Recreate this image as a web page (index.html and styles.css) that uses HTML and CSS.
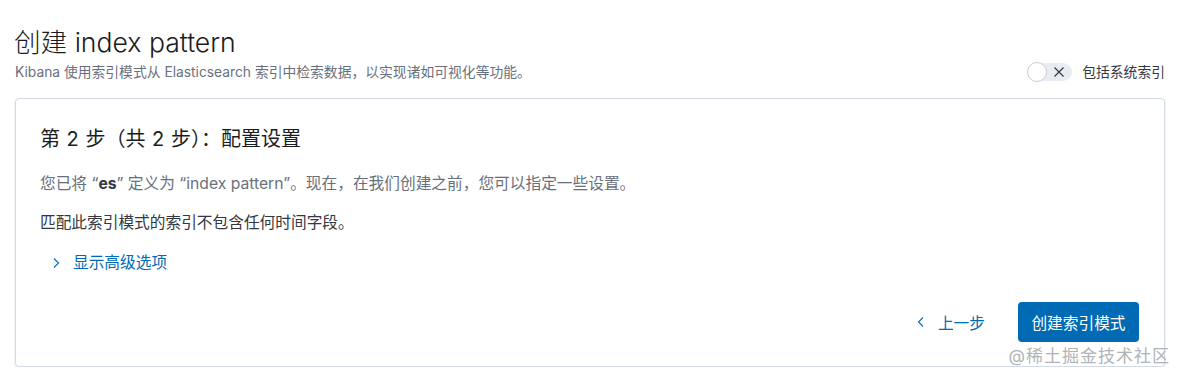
FILE: index.html
```html
<!DOCTYPE html>
<html>
<head>
    <link rel="stylesheet" href="styles.css">
</head>
<body>
    <div class="page-header">
        <div class="header-text">
            <h1 class="page-title">创建 index pattern</h1>
            <p class="page-subtitle">Kibana 使用索引模式从 Elasticsearch 索引中检索数据，以实现诸如可视化等功能。</p>
        </div>
        <label class="switch-group">
            <span class="switch">
                <span class="switch-thumb"></span>
                <svg class="switch-icon" width="12" height="12" viewBox="0 0 12 12">
                    <path d="M1.5 1.5 L10.5 10.5 M10.5 1.5 L1.5 10.5" stroke="#343741" stroke-width="1.2" fill="none"/>
                </svg>
            </span>
            <span class="switch-label">包括系统索引</span>
        </label>
    </div>

    <div class="panel">
        <h2 class="step-title">第 2 步（共 2 步）：配置设置</h2>
        <p class="step-desc">您已将 “<strong>es</strong>” 定义为 “index pattern”。现在，在我们创建之前，您可以指定一些设置。</p>
        <p class="step-note">匹配此索引模式的索引不包含任何时间字段。</p>
        <a class="link-toggle" href="#">
            <svg width="12" height="12" viewBox="0 0 12 12">
                <path d="M4 1.5 L8.5 6 L4 10.5" stroke="#006bb4" stroke-width="1.1" fill="none"/>
            </svg>
            <span>显示高级选项</span>
        </a>

        <div class="panel-footer">
            <a class="back-link" href="#">
                <svg width="12" height="12" viewBox="0 0 12 12">
                    <path d="M8 1.5 L3.5 6 L8 10.5" stroke="#006bb4" stroke-width="1.1" fill="none"/>
                </svg>
                <span>上一步</span>
            </a>
            <button class="primary-btn">创建索引模式</button>
        </div>
        <div class="watermark">@稀土掘金技术社区</div>
    </div>
</body>
</html>
```

FILE: styles.css
```css
body {
    margin: 0;
    padding: 24px 18px 0 15px;
    font-family: Inter, "Noto Sans CJK SC", sans-serif;
    color: #343741;
    background: #fff;
}
.page-header {
    display: flex;
    justify-content: space-between;
    align-items: flex-end;
}
.page-title {
    margin: 0 0 3px -1px;
    font-size: 26.6px;
    line-height: 36px;
    font-weight: 300;
    color: #1a1c21;
}
.page-subtitle {
    margin: 0;
    font-size: 13.8px;
    line-height: 18px;
    color: #69707d;
}
.switch-group {
    display: flex;
    align-items: center;
}
.switch {
    position: relative;
    width: 44px;
    height: 18px;
    border-radius: 10px;
    background: #e9edf3;
    display: flex;
    align-items: center;
    justify-content: flex-end;
    padding-right: 7px;
    box-sizing: border-box;
    margin-right: 10px;
}
.switch-thumb {
    position: absolute;
    left: -1px;
    top: -1px;
    width: 18px;
    height: 18px;
    border-radius: 50%;
    background: #fff;
    border: 1px solid #c5cbd6;
}
.switch-label {
    font-size: 13.8px;
    line-height: 18px;
    color: #343741;
}
.panel {
    position: relative;
    margin-top: 17px;
    height: 269px;
    box-sizing: border-box;
    border: 1px solid #d3dae6;
    border-radius: 4px;
    box-shadow: 0 1px 2px rgba(0, 0, 0, 0.12);
    padding: 24px;
    display: flex;
    flex-direction: column;
    align-items: flex-start;
}
.step-title {
    margin: 2px 0 0;
    font-size: 20px;
    line-height: 28px;
    font-weight: 400;
    color: #1a1c21;
    word-spacing: 1px;
}
.step-desc {
    margin: 20px 0 0;
    font-size: 15.7px;
    line-height: 21px;
    color: #69707d;
}
.step-desc strong {
    color: #343741;
}
.step-note {
    margin: 18px 0 0;
    font-size: 15.7px;
    line-height: 21px;
    color: #343741;
}
.link-toggle {
    margin-top: 19px;
    margin-left: 10px;
    display: flex;
    align-items: center;
    gap: 11px;
    font-size: 15.7px;
    line-height: 21px;
    color: #006bb4;
    text-decoration: none;
}
.panel-footer {
    margin-top: auto;
    align-self: stretch;
    display: flex;
    justify-content: flex-end;
    align-items: center;
}
.back-link {
    display: flex;
    align-items: center;
    gap: 11px;
    font-size: 15.7px;
    color: #006bb4;
    text-decoration: none;
    margin-right: 33px;
}
.primary-btn {
    height: 40px;
    width: 121px;
    margin-right: 1px;
    border: none;
    border-radius: 4px;
    background: #006bb4;
    color: #fff;
    font-family: inherit;
    font-size: 15.7px;
    cursor: pointer;
}
.watermark {
    position: absolute;
    right: -6px;
    bottom: -2px;
    font-size: 17px;
    line-height: 24px;
    color: #b0b3b8;
    letter-spacing: 1px;
}
```
